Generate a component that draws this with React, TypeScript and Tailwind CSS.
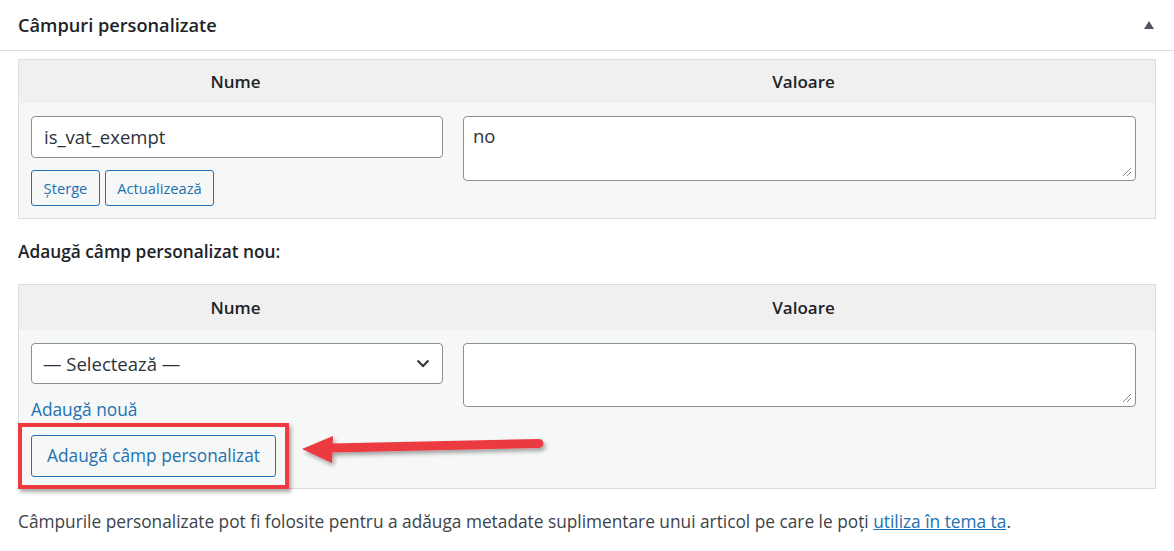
import React from "react";

const font = { fontFamily: '"Open Sans", "Noto Sans", sans-serif' };

function Resize() {
  return (
    <svg className="absolute right-[3px] bottom-[3px]" width="10" height="10" viewBox="0 0 10 10">
      <line x1="1" y1="9" x2="9" y2="1" stroke="#8c8f94" strokeWidth="1" />
      <line x1="5" y1="9" x2="9" y2="5" stroke="#8c8f94" strokeWidth="1" />
    </svg>
  );
}

export default function App() {
  return (
    <div className="relative w-[1174px] h-[551px] overflow-hidden bg-white text-[#3c434a]" style={font}>
      {/* header */}
      <div className="flex h-[51px] items-center justify-between border-b border-[#dcdcde] pl-[18px] pr-[20px]">
        <h2 className="text-[18.2px] font-semibold text-[#1d2327] leading-[24px]">Câmpuri personalizate</h2>
        <svg width="10" height="8" viewBox="0 0 10 8">
          <polygon points="5,0 10,8 0,8" fill="#50575e" />
        </svg>
      </div>

      <div className="px-[18px] pt-[8px]">
        {/* table 1 */}
        <div className="w-[1138px] border border-[#dcdcde] bg-[#f6f7f7]">
          <div className="flex h-[43px] items-center bg-[#f0f0f1] text-[17px] font-semibold text-[#1d2327]">
            <div className="w-[433px] text-center">Nume</div>
            <div className="flex-1 text-center">Valoare</div>
          </div>
          <div className="flex pt-[13px] pb-[12px]">
            <div className="w-[433px] pl-[12px] pr-[9px]">
              <div className="flex h-[42px] items-center rounded-[4px] border border-[#8c8f94] bg-white px-[12px] text-[18.5px] text-[#2c3338]">
                is_vat_exempt
              </div>
              <div className="mt-[12px] flex gap-[5px]">
                <button className="h-[36px] w-[69px] rounded-[3px] border border-[#2271b1] bg-[#f6f7f7] text-[14.7px] text-[#2271b1]">
                  Șterge
                </button>
                <button className="h-[36px] w-[109px] rounded-[3px] border border-[#2271b1] bg-[#f6f7f7] text-[14.7px] text-[#2271b1]">
                  Actualizează
                </button>
              </div>
            </div>
            <div className="flex-1 pl-[11px] pr-[19px]">
              <div className="relative h-[65px] rounded-[4px] border border-[#8c8f94] bg-white px-[9px] pt-[5px] text-[18.5px] leading-[28px] text-[#2c3338]">
                no
                <Resize />
              </div>
            </div>
          </div>
        </div>

        <div className="h-[65px] pt-[21px]">
          <h3 className="text-[17.3px] font-semibold leading-[24px] text-[#1d2327]">Adaugă câmp personalizat nou:</h3>
        </div>

        {/* table 2 */}
        <div className="w-[1138px] border border-[#dcdcde] bg-[#f6f7f7]">
          <div className="flex h-[45px] items-center bg-[#f0f0f1] text-[17px] font-semibold text-[#1d2327]">
            <div className="w-[433px] text-center">Nume</div>
            <div className="flex-1 text-center">Valoare</div>
          </div>
          <div className="flex pt-[13px] pb-[11px]">
            <div className="w-[433px] pl-[12px] pr-[9px]">
              <div className="flex h-[41px] items-center justify-between rounded-[4px] border border-[#8c8f94] bg-white pl-[11px] pr-[12px] text-[18.5px] text-[#2c3338]">
                <span>— Selectează —</span>
                <svg width="14" height="9" viewBox="0 0 14 9">
                  <polyline points="1.5,1.5 7,7 12.5,1.5" fill="none" stroke="#2c3338" strokeWidth="2" />
                </svg>
              </div>
              <div className="mt-[13px] h-[26px] text-[17.3px] leading-[26px] text-[#2271b1]">Adaugă nouă</div>
              <button className="mt-[12px] h-[42px] w-[245px] rounded-[3px] border border-[#2271b1] bg-[#f6f7f7] text-[17.3px] text-[#2271b1]">
                Adaugă câmp personalizat
              </button>
            </div>
            <div className="flex-1 pl-[11px] pr-[19px]">
              <div className="relative h-[64px] rounded-[4px] border border-[#8c8f94] bg-white">
                <Resize />
              </div>
            </div>
          </div>
        </div>

        <p className="mt-[21px] whitespace-nowrap text-[17.3px] leading-[24px] text-[#3c434a]">
          Câmpurile personalizate pot fi folosite pentru a adăuga metadate suplimentare unui articol pe care le poți{" "}
          <a className="text-[#2271b1] underline">utiliza în tema ta</a>.
        </p>
      </div>

      {/* annotation: red box */}
      <div className="absolute left-[18px] top-[423px] h-[66px] w-[271px] border-[4px] border-[#ec3b41] shadow-[2px_3px_4px_rgba(0,0,0,0.35)]" />
      {/* annotation: arrow */}
      <svg className="absolute left-[295px] top-[428px]" width="260" height="45" viewBox="0 0 260 45">
        <defs>
          <filter id="sh" x="-10%" y="-50%" width="120%" height="200%">
            <feDropShadow dx="2" dy="3" stdDeviation="2" floodColor="#000" floodOpacity="0.35" />
          </filter>
        </defs>
        <g filter="url(#sh)">
          <line x1="36" y1="20" x2="244" y2="15.5" stroke="#ec3b41" strokeWidth="9" strokeLinecap="round" />
          <polygon points="7,21 38,8 37,35" fill="#ec3b41" />
        </g>
      </svg>
    </div>
  );
}
